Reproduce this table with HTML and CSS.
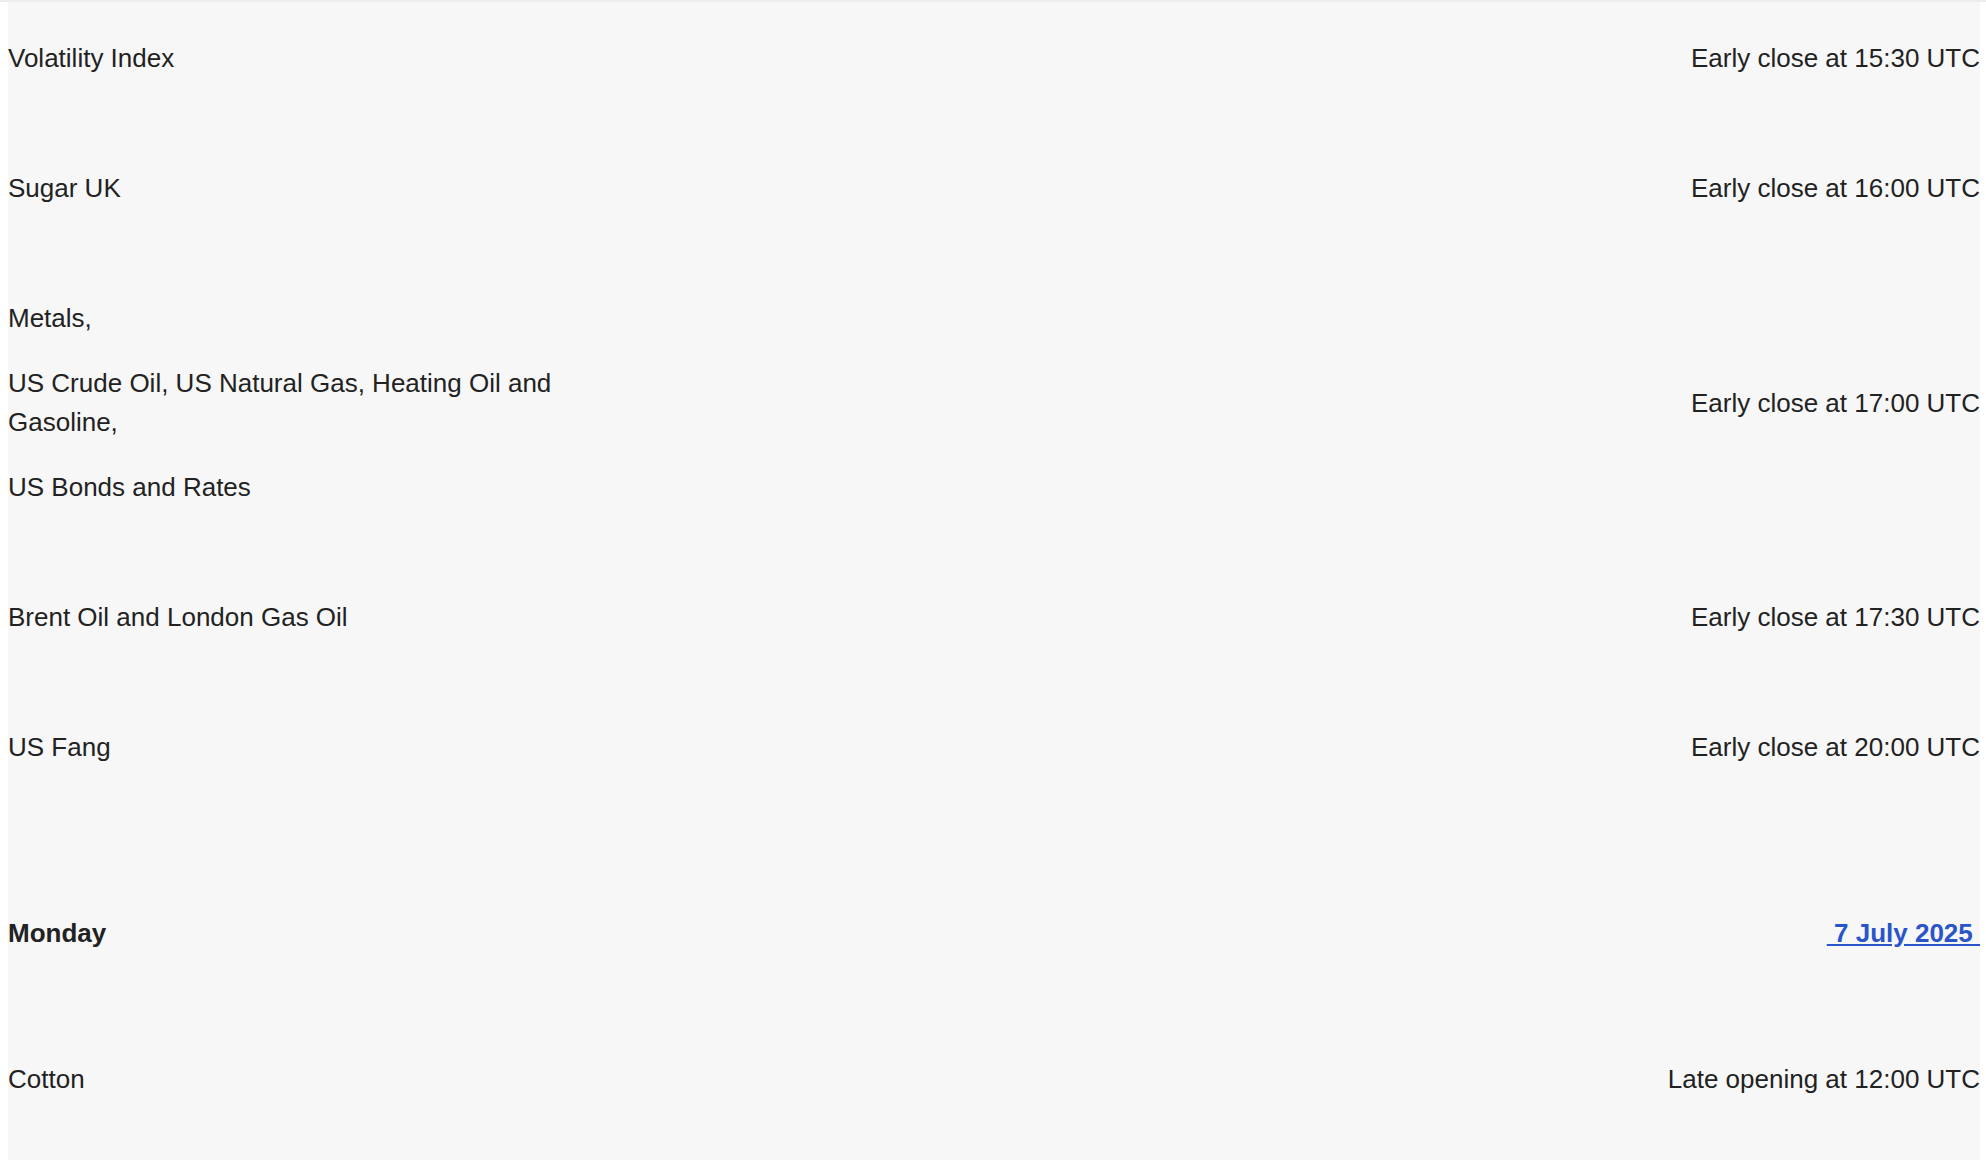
FILE: index.html
```html
<!DOCTYPE html>
<html lang="en">
<head>
<meta charset="utf-8">
<title>Trading hours</title>
<link rel="stylesheet" href="styles.css">
</head>
<body>
<div class="topline"></div>
<div class="panel">
  <div class="row first">
    <div class="cell name"><p>Volatility Index</p></div>
    <div class="cell info"><p>Early close at 15:30 UTC</p></div>
  </div>
  <div class="row">
    <div class="cell name"><p>Sugar UK</p></div>
    <div class="cell info"><p>Early close at 16:00 UTC</p></div>
  </div>
  <div class="row">
    <div class="cell name">
      <p>Metals,</p>
      <p>US Crude Oil, US Natural Gas, Heating Oil and Gasoline,</p>
      <p>US Bonds and Rates</p>
    </div>
    <div class="cell info"><p>Early close at 17:00 UTC</p></div>
  </div>
  <div class="row">
    <div class="cell name"><p>Brent Oil and London Gas Oil</p></div>
    <div class="cell info"><p>Early close at 17:30 UTC</p></div>
  </div>
  <div class="row">
    <div class="cell name"><p>US Fang</p></div>
    <div class="cell info"><p>Early close at 20:00 UTC</p></div>
  </div>
  <div class="row day">
    <div class="cell name"><p class="dayname">Monday</p></div>
    <div class="cell info"><p class="dayname"><a class="datelink" href="#">&nbsp;7 July 2025&nbsp;</a></p></div>
  </div>
  <div class="row">
    <div class="cell name"><p>Cotton</p></div>
    <div class="cell info"><p>Late opening at 12:00 UTC</p></div>
  </div>
</div>
</body>
</html>
```
FILE: styles.css
```css
html, body {
  margin: 0;
  padding: 0;
  background: #ffffff;
}
body {
  font-family: "Liberation Sans", Arial, Helvetica, sans-serif;
  font-size: 26px;
  line-height: 39px;
  color: #222222;
  height: 1160px;
  overflow: hidden;
}
.topline {
  height: 2px;
  background: #ededed;
}
.panel {
  margin-left: 8px;
  width: 1972px;
  background: #f7f7f7;
  min-height: 1158px;
}
.row {
  display: flex;
  justify-content: space-between;
  align-items: center;
}
.cell {
  padding: 19.5px 0;
}
.row.first .cell {
  padding-top: 11px;
}
.cell p {
  margin: 26px 0;
}
.name {
  width: 600px;
}
.info {
  text-align: right;
}
.row.day .cell {
  padding: 75.5px 0 35.5px;
}
.dayname {
  font-weight: bold;
}
.datelink {
  color: #2a55c9;
  text-decoration: underline;
}
```
